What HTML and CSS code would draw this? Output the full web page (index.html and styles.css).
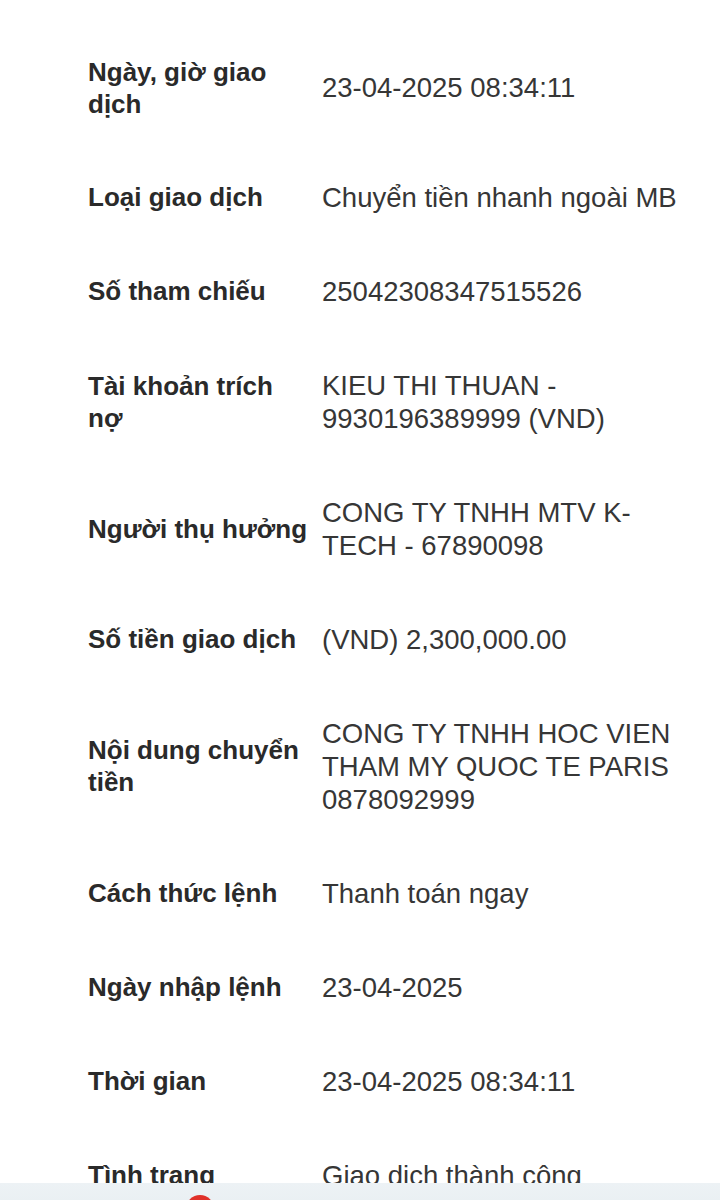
FILE: index.html
```html
<!DOCTYPE html>
<html lang="vi">
<head>
<meta charset="utf-8">
<link rel="stylesheet" href="styles.css">
</head>
<body>
<div class="screen">
  <div class="details">
    <div class="row"><div class="label">Ngày, giờ giao dịch</div><div class="value">23-04-2025 08:34:11</div></div>
    <div class="row"><div class="label">Loại giao dịch</div><div class="value">Chuyển tiền nhanh ngoài MB</div></div>
    <div class="row"><div class="label">Số tham chiếu</div><div class="value">25042308347515526</div></div>
    <div class="row"><div class="label">Tài khoản trích nợ</div><div class="value">KIEU THI THUAN - 9930196389999 (VND)</div></div>
    <div class="row"><div class="label">Người thụ hưởng</div><div class="value">CONG TY TNHH MTV K-TECH - 67890098</div></div>
    <div class="row"><div class="label">Số tiền giao dịch</div><div class="value">(VND) 2,300,000.00</div></div>
    <div class="row"><div class="label">Nội dung chuyển tiền</div><div class="value">CONG TY TNHH HOC VIEN THAM MY QUOC TE PARIS 0878092999</div></div>
    <div class="row"><div class="label">Cách thức lệnh</div><div class="value">Thanh toán ngay</div></div>
    <div class="row"><div class="label">Ngày nhập lệnh</div><div class="value">23-04-2025</div></div>
    <div class="row"><div class="label">Thời gian</div><div class="value">23-04-2025 08:34:11</div></div>
    <div class="row"><div class="label">Tình trạng</div><div class="value">Giao dịch thành công</div></div>
  </div>
  <div class="bottom-bar"><span class="dot"></span></div>
</div>
</body>
</html>
```
FILE: styles.css
```css
html, body {
  margin: 0;
  padding: 0;
  background: #ffffff;
}
.screen {
  position: relative;
  width: 720px;
  height: 1200px;
  overflow: hidden;
  font-family: "Liberation Sans", Arial, sans-serif;
}
.details {
  padding: 25px 38px 0 88px;
}
.row {
  display: flex;
  align-items: center;
  padding: 30.5px 0;
}
.label {
  width: 234px;
  flex: none;
  padding-right: 12px;
  box-sizing: border-box;
  font-size: 26px;
  line-height: 32px;
  font-weight: 700;
  color: #2a2a2a;
}
.value {
  flex: 1;
  font-size: 27.5px;
  line-height: 33px;
  color: #363636;
}
.bottom-bar {
  position: absolute;
  left: 0;
  right: 0;
  top: 1183px;
  height: 40px;
  background: linear-gradient(#edf2f5, #e6edf1);
}
.dot {
  position: absolute;
  left: 186px;
  top: 12px;
  width: 28px;
  height: 28px;
  border-radius: 50%;
  background: #e0312a;
}
```
